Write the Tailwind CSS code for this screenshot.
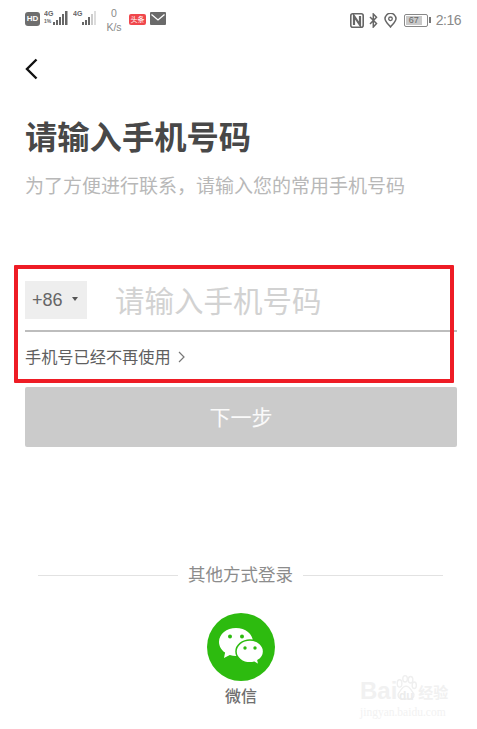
<!DOCTYPE html>
<html lang="zh">
<head>
<meta charset="utf-8">
<script src="https://cdn.jsdelivr.net/npm/@tailwindcss/browser@4"></script>
</head>
<body class="bg-white">
<div class="relative w-[477px] h-[729px] overflow-hidden bg-white font-['Liberation_Sans','Noto_Sans_CJK_SC',sans-serif]">
  <!-- status bar -->
  <div class="h-[36px] pl-[25px] pr-[16px] flex items-start justify-between text-[#777]">
    <div class="flex items-start pt-[10px]">
      <div class="w-[15px] h-[14px] mt-[2px] rounded-[3px] bg-[#6e6e6e] text-white text-[8px] font-bold leading-[14px] text-center">HD</div>
      <svg class="ml-[4px]" width="25" height="16" viewBox="0 0 25 16" fill="#666">
        <text x="0" y="6" font-size="7" font-weight="700" font-family="Liberation Sans" fill="#666">4G</text>
        <text x="0" y="13" font-size="5" font-weight="700" font-family="Liberation Sans" fill="#666">1%</text>
        <rect x="9" y="12" width="2" height="3"/><rect x="12" y="10" width="2" height="5"/><rect x="15" y="7" width="2" height="8"/><rect x="18" y="4" width="2" height="11"/><rect x="21" y="1" width="2.500" height="14"/>
      </svg>
      <svg class="ml-[4px]" width="25" height="16" viewBox="0 0 25 16" fill="#666">
        <text x="0" y="6" font-size="7" font-weight="700" font-family="Liberation Sans" fill="#666">4G</text>
        <rect x="9" y="12" width="2" height="3"/><rect x="12" y="10" width="2" height="5"/><rect x="15" y="7" width="2" height="8"/><rect x="18" y="4" width="2" height="11" fill="#ccc"/><rect x="21" y="1" width="2" height="14" fill="#ddd"/>
      </svg>
      <div class="ml-[8px] -mt-[3px] w-[16px] text-[10.500px] leading-[13px] text-center text-[#8a8a8a] flex flex-col items-center"><span>0</span><span class="whitespace-nowrap mt-[1px]">K/s</span></div>
      <div class="ml-[7px] mt-[4px] w-[17px] h-[11px] rounded-[2px] bg-[#f0474c] text-white text-[7px] leading-[11px] text-center whitespace-nowrap">头条</div>
      <svg class="ml-[4px] mt-[2px]" width="16" height="13" viewBox="0 0 16 13"><rect width="16" height="13" rx="1" fill="#6a6a6a"/><path d="M1.500 2.500 8 8l6.500-5.500" fill="none" stroke="#fff" stroke-width="1.300"/></svg>
    </div>
    <div class="flex items-center pt-[4px] h-[36px]">
      <svg width="14" height="15" viewBox="0 0 14 15"><rect x="0.800" y="0.800" width="12.400" height="13.400" rx="2" fill="none" stroke="#666" stroke-width="1.600"/><path d="M4 12V3l6 9V3" fill="none" stroke="#666" stroke-width="2.200"/></svg>
      <svg class="ml-[5px]" width="9" height="15" viewBox="0 0 9 15"><path d="M1 4l6.500 6.500L4.300 14V1l3.200 3.300L1 11" fill="none" stroke="#666" stroke-width="1.500"/></svg>
      <svg class="ml-[6px]" width="13" height="15" viewBox="0 0 13 15"><path d="M6.500 14C3.500 10.500 1 8.300 1 5.800a5.500 5.500 0 0 1 11 0C12 8.300 9.500 10.500 6.500 14z" fill="none" stroke="#666" stroke-width="1.500"/><circle cx="6.500" cy="5.800" r="1.800" fill="none" stroke="#666" stroke-width="1.300"/></svg>
      <div class="ml-[7px] w-[24px] h-[13px] border border-[#888] rounded-[2px] p-[1px]"><div class="h-full w-[16px] bg-[#c9c9c9] text-[#666] text-[9px] leading-[9px] text-center">67</div></div>
      <div class="ml-[1px] w-[2px] h-[6px] bg-[#777]"></div>
      <span class="ml-[5px] text-[14px] tracking-[-0.500px] text-[#8a8a8a]">2:16</span>
    </div>
  </div>

  <!-- back -->
  <div class="pl-[25px] pt-[22px] h-[49px]">
    <svg width="13" height="22" viewBox="0 0 13 22"><path d="M11.500 1.500 2 11l9.500 9.500" fill="none" stroke="#111" stroke-width="2.400"/></svg>
  </div>

  <div class="px-[25px]">
    <h1 class="mt-[33px] text-[32.300px] leading-[40px] font-bold text-[#484848]">请输入手机号码</h1>
    <p class="mt-[17px] text-[19px] leading-[24px] text-[#b8b8b8]">为了方便进行联系，请输入您的常用手机号码</p>

    <!-- phone field -->
    <div class="mt-[82px] w-[432px] h-[51px] border-b-2 border-[#bdbdbd] flex items-start">
      <div class="w-[62px] h-[38px] bg-[#eeeeee] flex items-center pl-[7px] text-[18px] text-[#666]">
        <span>+86</span>
        <span class="ml-[9px] -mt-[2px] w-0 h-0 border-x-[3.500px] border-x-transparent border-t-[4px] border-t-[#555]"></span>
      </div>
      <div class="ml-[28px] text-[29.500px] leading-[42px] text-[#d2d2d2]">请输入手机号码</div>
    </div>
    <div class="mt-[13px] h-[24px] flex items-center text-[16.200px] text-[#5f5f5f]">
      <span>手机号已经不再使用</span>
      <svg class="ml-[7px]" width="7" height="12" viewBox="0 0 7 12"><path d="M1 1l5 5-5 5" fill="none" stroke="#777" stroke-width="1.200"/></svg>
    </div>

    <button class="mt-[18px] w-[432px] h-[60px] rounded-[2px] bg-[#cbcbcb] text-white/90 text-[21px] pt-[1px] flex items-center justify-center">下一步</button>

    <div class="mt-[116px] ml-[13px] w-[405px] flex items-center gap-[10px] text-[17.500px] leading-[24px] text-[#8c8c8c]">
      <div class="flex-1 h-px bg-[#e2e2e2]"></div>
      <span>其他方式登录</span>
      <div class="flex-1 h-px bg-[#e2e2e2]"></div>
    </div>

    <div class="mt-[26px] flex flex-col items-center w-[432px]">
      <div class="w-[68px] h-[68px] rounded-full bg-[#2dbb0f] flex items-center justify-center">
        <svg width="46" height="40" viewBox="0 0 46 40">
          <path d="M18 1C8.600 1 1 7.200 1 14.900c0 4.300 2.400 8.100 6.100 10.700L6 31l5.800-3c1.900.6 4 .9 6.200.9 9.400 0 17-6.200 17-14S27.400 1 18 1z" fill="#fff"/>
          <path d="M32 13c-7.700 0-14 5.100-14 11.400S24.300 35.800 32 35.800c1.500 0 3-.2 4.300-.6l4.700 3-1-4.800c3.500-2.100 5.600-5.400 5.600-9C45.600 18.100 39.700 13 32 13z" fill="#fff" stroke="#2dbb0f" stroke-width="1.500"/>
          <circle cx="12" cy="9.500" r="2" fill="#2dbb0f"/><circle cx="24" cy="9.500" r="2" fill="#2dbb0f"/>
          <circle cx="27" cy="21" r="1.700" fill="#2dbb0f"/><circle cx="37" cy="21" r="1.700" fill="#2dbb0f"/>
        </svg>
      </div>
      <div class="mt-[5px] text-[16px] leading-[22px] font-medium text-[#6f6f6f]">微信</div>
    </div>
  </div>

  <!-- annotation rectangle -->
  <div class="absolute left-[14px] top-[265px] w-[440px] h-[118px] border-[4px] border-[#ee1c25] rounded-[1px]"></div>

  <!-- watermark -->
  <div class="absolute left-[360px] top-[674px] w-[100px] text-[#f1f1f1]">
    <div class="flex items-end font-bold h-[30px]">
      <span class="text-[24px] leading-[26px]">Bai</span>
      <div class="relative w-[22px] h-[30px] -ml-[2px] flex items-end justify-center">
        <svg class="absolute left-0 top-0" width="22" height="28" viewBox="0 0 24 28" fill="none" stroke="#efefef" stroke-width="1.500"><ellipse cx="5" cy="9" rx="2.500" ry="4"/><ellipse cx="11" cy="4" rx="2.500" ry="3.500"/><ellipse cx="17" cy="5" rx="2.500" ry="3.500"/><ellipse cx="21" cy="11" rx="2.300" ry="3.500"/><path d="M12 12c-4 0-5 4-7 6-3 3-2 8 3 8h8c5 0 6-5 3-8-2-2-3-6-7-6z"/></svg>
        <span class="relative text-[12px] leading-[16px] text-[#ececec]">du</span>
      </div>
      <span class="ml-[1px] text-[15px] leading-[22px]">经验</span>
    </div>
    <div class="mt-[1px] text-[11.500px] leading-[14px] font-['Liberation_Serif',serif] text-[#f2f2f2] whitespace-nowrap">jingyan.baidu.com</div>
  </div>
</div>
</body>
</html>
